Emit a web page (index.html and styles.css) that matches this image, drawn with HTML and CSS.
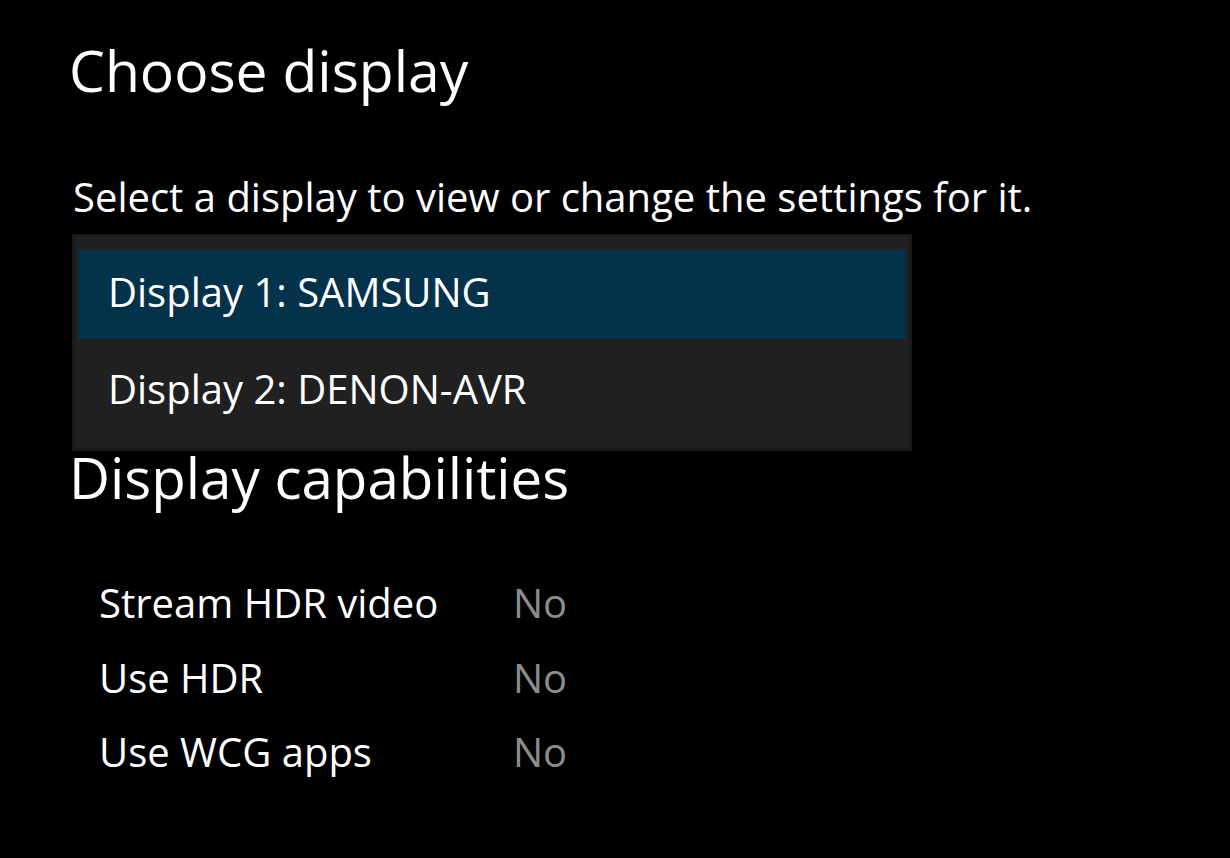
FILE: index.html
```html
<!DOCTYPE html>
<html>
<head>
<meta charset="utf-8">
<link rel="stylesheet" href="styles.css">
</head>
<body>
<main class="page">
  <h1 class="title">Choose display</h1>
  <p class="hint">Select a display to view or change the settings for it.</p>
  <div class="dropdown">
    <div class="option selected">Display 1: SAMSUNG</div>
    <div class="option">Display 2: DENON-AVR</div>
  </div>
  <h2 class="title caps-title">Display capabilities</h2>
  <div class="caps">
    <div class="cap-row"><span class="cap-name">Stream HDR video</span><span class="cap-val">No</span></div>
    <div class="cap-row"><span class="cap-name">Use HDR</span><span class="cap-val">No</span></div>
    <div class="cap-row"><span class="cap-name">Use WCG apps</span><span class="cap-val">No</span></div>
  </div>
</main>
</body>
</html>
```
FILE: styles.css
```css
html, body {
  margin: 0;
  padding: 0;
  background: #000;
  width: 1230px;
  height: 858px;
  overflow: hidden;
}
body {
  font-family: "Open Sans", "Noto Sans", sans-serif;
  color: #fff;
}
.page {
  padding: 32px 0 0 69px;
  display: flex;
  flex-direction: column;
  align-items: flex-start;
}
.title {
  margin: 0;
  font-weight: 400;
  font-size: 57px;
  line-height: 76px;
}
.hint {
  margin: 65px 0 0 4px;
  font-size: 40px;
  line-height: 48px;
}
.dropdown {
  margin: 13px 0 0 3px;
  width: 840px;
  box-sizing: border-box;
  border: 3px solid #1a1a1a;
  background: #202020;
  padding: 13px 3px 12px 3px;
  display: flex;
  flex-direction: column;
  gap: 8px;
}
.option {
  height: 89px;
  box-sizing: border-box;
  padding: 15px 0 0 30px;
  font-size: 40px;
  line-height: 54px;
}
.option.selected {
  background: #03324a;
}
.caps-title {
  font-size: 56.5px;
  line-height: 48px;
  margin-top: 3px;
}
.caps {
  margin: 64px 0 0 30px;
  display: flex;
  flex-direction: column;
}
.cap-row {
  display: flex;
  line-height: 74.5px;
  font-size: 40px;
}
.cap-name {
  width: 414px;
}
.cap-val {
  color: #8c8c8c;
}
```
